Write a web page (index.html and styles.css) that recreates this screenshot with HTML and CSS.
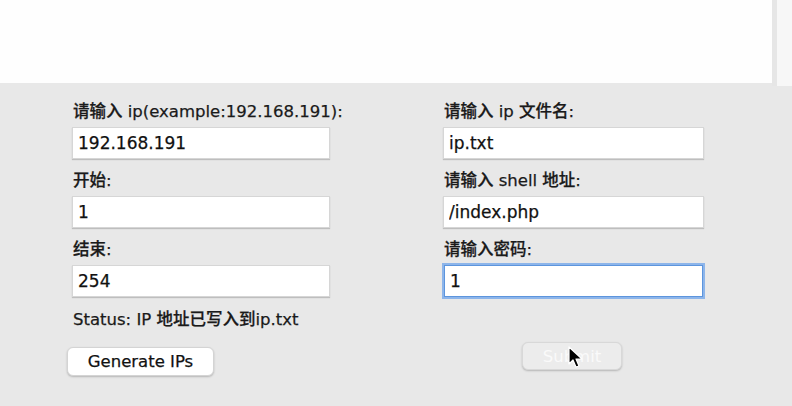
FILE: index.html
```html
<!DOCTYPE html>
<html lang="zh">
<head>
<meta charset="utf-8">
<title>IP Generator</title>
<link rel="stylesheet" href="styles.css">
</head>
<body>
<div class="top">
  <div class="canvas"></div>
  <div class="scroll"></div>
</div>
<div class="panel">
  <div class="col left">
    <label class="lbl">请输入 ip(example:192.168.191):</label>
    <input class="field" type="text" value="192.168.191">
    <label class="lbl">开始:</label>
    <input class="field" type="text" value="1">
    <label class="lbl">结束:</label>
    <input class="field" type="text" value="254">
    <div class="status">Status: IP 地址已写入到ip.txt</div>
    <button class="btn gen">Generate IPs</button>
  </div>
  <div class="col right">
    <label class="lbl">请输入 ip 文件名:</label>
    <input class="field" type="text" value="ip.txt">
    <label class="lbl">请输入 shell 地址:</label>
    <input class="field" type="text" value="/index.php">
    <label class="lbl">请输入密码:</label>
    <input class="field focus" type="text" value="1">
    <div class="submit-wrap">
      <button class="btn submit" disabled>Submit</button>
      <svg class="cursor" width="16" height="24" viewBox="0 0 16 24"><path d="M1 1 L1 18 L5 14 L8 21 L11 20 L8 13 L14 13 Z" fill="#000" stroke="#fff" stroke-width="1.2" stroke-linejoin="round"/></svg>
    </div>
  </div>
</div>
</body>
</html>
```
FILE: styles.css
```css
html, body {
  margin: 0;
  padding: 0;
  background: #e8e8e8;
  font-family: "DejaVu Sans", "Noto Sans CJK SC", sans-serif;
  font-weight: 500;
  color: #1a1a1a;
  -webkit-text-stroke: 0.25px currentColor;
}
.top {
  display: flex;
  height: 83px;
}
.canvas {
  flex: 1;
  background: #fefefe;
}
.scroll {
  width: 20px;
  height: 86px;
  background: #f7f7f7;
  border-left: 5px solid #e6e6e6;
  box-sizing: border-box;
}
.panel {
  display: grid;
  grid-template-columns: 258px 261px;
  column-gap: 113px;
  padding: 19px 0 0 72px;
  height: 323px;
  box-sizing: border-box;
}
.col {
  display: flex;
  flex-direction: column;
  align-items: flex-start;
}
.lbl {
  height: 20px;
  line-height: 20px;
  font-size: 16.5px;
  margin: 0 0 5px 1px;
  white-space: nowrap;
}
.field {
  width: 100%;
  height: 32px;
  box-sizing: border-box;
  border: 1px solid #d6d6d6;
  background: #fff;
  box-shadow: 0 1px 1px rgba(0,0,0,0.18);
  font-family: inherit;
  font-weight: 500;
  font-size: 17px;
  color: #111;
  -webkit-text-stroke: 0.25px #111;
  padding: 0 5px;
  margin: 0 0 12px 0;
  outline: none;
}
.field.focus {
  width: 259px;
  margin-left: 1px;
  border: 1px solid #5d95dd;
  box-shadow: 0 0 0 2px #8db5ea;
}
.status {
  height: 20px;
  line-height: 20px;
  font-size: 16.5px;
  margin: 1px 0 0 1px;
  white-space: nowrap;
}
.btn {
  font-family: inherit;
  font-weight: 500;
  font-size: 16.5px;
  border-radius: 6px;
  border: 1px solid #d4d4d4;
  background: #fff;
  box-shadow: 0 1px 2px rgba(0,0,0,0.22);
  color: #111;
  -webkit-text-stroke: 0.25px #111;
  padding: 0;
}
.gen {
  width: 147px;
  height: 29px;
  margin: 17px 0 0 -5px;
}
.submit-wrap {
  position: relative;
  margin: 33px 0 0 79px;
}
.submit {
  width: 100px;
  height: 28px;
  background: #ececec;
  color: #fafafa;
  -webkit-text-stroke: 0;
  border-color: #d8d8d8;
}
.cursor {
  position: absolute;
  left: 46px;
  top: 4px;
}
```
